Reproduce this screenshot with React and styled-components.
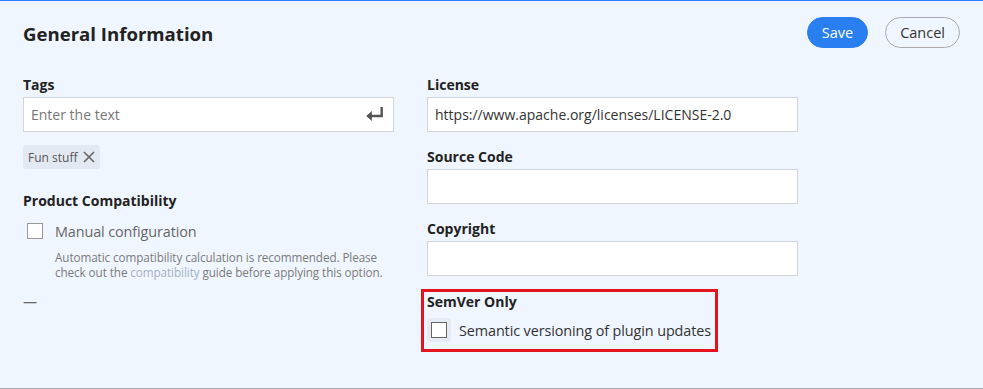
import React from 'react';
import styled, { createGlobalStyle } from 'styled-components';

const GlobalStyle = createGlobalStyle`
  html, body {
    margin: 0;
    padding: 0;
    background: #f0f6ff;
  }
  body {
    font-family: "Open Sans", "Noto Sans", sans-serif;
    color: #222;
  }
`;

const Page = styled.div`
  box-sizing: border-box;
  width: 983px;
  height: 389px;
  border-top: 1px solid #2c7ff7;
  border-bottom: 1px solid #aaaaaa;
  background: #f0f6ff;
  padding: 16px 23px 0 23px;
`;

const Header = styled.header`
  display: flex;
  align-items: flex-start;
  justify-content: space-between;
  height: 31px;
`;

const Title = styled.h1`
  margin: 1px 0 0 0;
  font-size: 18.6px;
  font-weight: 700;
  line-height: 31px;
  color: #222;
`;

const Actions = styled.div`
  display: flex;
  gap: 17px;
`;

const Button = styled.button`
  box-sizing: border-box;
  height: 31px;
  border-radius: 16px;
  font-family: inherit;
  font-size: 14.5px;
  padding: 0 14px;
  background: ${p => (p.primary ? '#2a7ff0' : 'transparent')};
  color: ${p => (p.primary ? '#fff' : '#333')};
  border: 1px solid ${p => (p.primary ? '#2a7ff0' : '#a9a9ae')};
  cursor: pointer;
`;

const Columns = styled.div`
  display: grid;
  grid-template-columns: 371px 371px;
  column-gap: 33px;
  margin-top: 27px;
  align-items: start;
`;

const Column = styled.div`
  display: flex;
  flex-direction: column;
`;

const Field = styled.div`
  display: flex;
  flex-direction: column;
  margin-bottom: 15px;
`;

const Label = styled.div`
  font-size: 14px;
  font-weight: 700;
  line-height: 20px;
  color: #222;
  margin-bottom: ${p => p.$mb || '2px'};
  margin-top: ${p => p.$mt || '0'};
`;

const InputBox = styled.div`
  box-sizing: border-box;
  height: 35px;
  display: flex;
  align-items: center;
  justify-content: space-between;
  background: #fff;
  border: 1px solid #d3d5da;
  padding: 0 9px 0 7px;
  font-size: 14px;
  color: ${p => (p.placeholder ? '#777' : '#333')};
`;

const Chip = styled.div`
  align-self: flex-start;
  display: flex;
  align-items: center;
  gap: 6px;
  height: 24px;
  margin-top: 13px;
  padding: 0 5px;
  border-radius: 3px;
  background: #e3e9f2;
  font-size: 12px;
  color: #555;
`;

const CheckRow = styled.label`
  display: flex;
  align-items: center;
  gap: 8px;
  font-size: 14.4px;
  letter-spacing: -0.1px;
  color: ${p => (p.muted ? '#666' : '#333')};
  white-space: nowrap;
`;

const CheckWrap = styled.span`
  width: 24px;
  height: 24px;
  display: flex;
  align-items: center;
  justify-content: center;
  border-radius: 4px;
  background: ${p => (p.hover ? '#e6ebf3' : 'transparent')};
`;

const CheckBox = styled.span`
  box-sizing: border-box;
  width: 16px;
  height: 16px;
  border: 1px solid ${p => (p.dark ? '#666' : '#999')};
  background: #fff;
`;

const Help = styled.p`
  margin: 7px 0 0 32px;
  font-size: 11.7px;
  letter-spacing: -0.08px;
  line-height: 15px;
  color: #7a7a7a;
  white-space: nowrap;
`;

const HelpLink = styled.a`
  color: #a4b0c6;
  text-decoration: none;
`;

const Dash = styled.div`
  margin-top: 12px;
  font-size: 14px;
  line-height: 20px;
  color: #666;
`;

const Highlight = styled.div`
  align-self: flex-start;
  margin: 1px 0 0 -3px;
  padding: 0 4px 7px 3px;
  outline: 3px solid #e3141f;
`;

const EnterIcon = () => (
  <svg width="19" height="17" viewBox="0 0 18 16" fill="none">
    <path d="M15.8 1v8.5H4" stroke="#555" strokeWidth="2.3" />
    <path d="M1.2 9.5L6.5 4.8v9.4z" fill="#555" />
  </svg>
);

const CloseIcon = () => (
  <svg width="12" height="12" viewBox="0 0 12 12">
    <path d="M1 1l10 10M11 1L1 11" stroke="#666" strokeWidth="1.6" />
  </svg>
);

const App = () => (
  <>
    <GlobalStyle />
    <Page>
      <Header>
        <Title>General Information</Title>
        <Actions>
          <Button primary>Save</Button>
          <Button>Cancel</Button>
        </Actions>
      </Header>
      <Columns>
        <Column>
          <Label>Tags</Label>
          <InputBox placeholder>
            <span>Enter the text</span>
            <EnterIcon />
          </InputBox>
          <Chip>
            Fun stuff
            <CloseIcon />
          </Chip>
          <Label $mt="22px" $mb="8px">Product Compatibility</Label>
          <CheckRow muted>
            <CheckWrap>
              <CheckBox />
            </CheckWrap>
            Manual configuration
          </CheckRow>
          <Help>
            Automatic compatibility calculation is recommended. Please
            <br />
            check out the <HelpLink href="#">compatibility</HelpLink> guide before applying this option.
          </Help>
          <Dash>—</Dash>
        </Column>
        <Column>
          <Field>
            <Label>License</Label>
            <InputBox>https://www.apache.org/licenses/LICENSE-2.0</InputBox>
          </Field>
          <Field>
            <Label>Source Code</Label>
            <InputBox />
          </Field>
          <Field>
            <Label>Copyright</Label>
            <InputBox />
          </Field>
          <Highlight>
            <Label $mb="6px">SemVer Only</Label>
            <CheckRow>
              <CheckWrap hover>
                <CheckBox dark />
              </CheckWrap>
              Semantic versioning of plugin updates
            </CheckRow>
          </Highlight>
        </Column>
      </Columns>
    </Page>
  </>
);

export default App;
